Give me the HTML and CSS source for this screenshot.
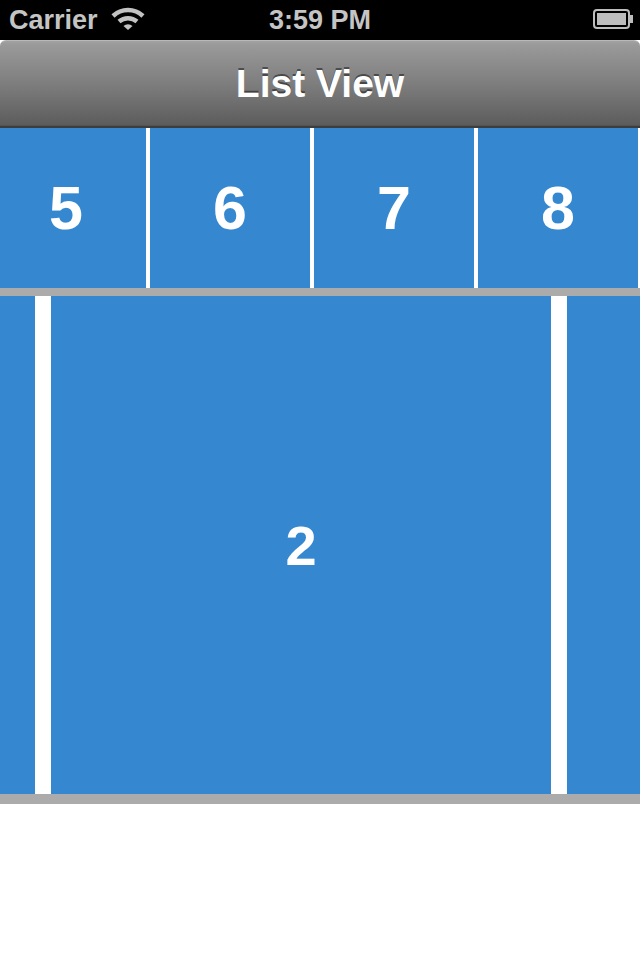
FILE: index.html
```html
<!DOCTYPE html>
<html lang="en">
<head>
    <meta charset="UTF-8">
    <meta name="viewport" content="width=device-width, initial-scale=1.0">
    <title>List View</title>
    <link rel="stylesheet" href="styles.css">
</head>
<body>
    <div class="statusbar">
        <div class="status-left">
            <span>Carrier</span>
            <svg class="wifi" width="34" height="24" viewBox="0 0 34 24">
                <path d="M2 9 A22 22 0 0 1 32 9" fill="none" stroke="#c2c2c2" stroke-width="4.5"/>
                <path d="M8 14.5 A14 14 0 0 1 26 14.5" fill="none" stroke="#c2c2c2" stroke-width="4.5"/>
                <path d="M12.5 19 L17 23 L21.5 19 A6.5 6.5 0 0 0 12.5 19 Z" fill="#c2c2c2"/>
            </svg>
        </div>
        <div class="status-time">3:59 PM</div>
        <div class="status-right">
            <svg width="42" height="20" viewBox="0 0 42 20">
                <rect x="1" y="1" width="35" height="18" rx="3" fill="none" stroke="#bdbdbd" stroke-width="2"/>
                <rect x="4" y="4" width="29" height="12" fill="#bdbdbd"/>
                <rect x="37" y="6" width="3" height="8" fill="#bdbdbd"/>
            </svg>
        </div>
    </div>

    <div class="navbar">
        <h1>List View</h1>
    </div>

    <!-- horizontal list, scrolled a bit -->
    <div class="strip">
        <div class="strip-track">
            <div class="tile">5</div>
            <div class="tile">6</div>
            <div class="tile">7</div>
            <div class="tile">8</div>
            <div class="tile"></div>
        </div>
    </div>

    <!-- paged list, neighbours peek in at the sides -->
    <div class="pager">
        <div class="pager-track">
            <div class="page"></div>
            <div class="page">2</div>
            <div class="page"></div>
        </div>
    </div>
</body>
</html>
```

FILE: styles.css
```css
* { box-sizing: border-box; }

body {
    margin: 0;
    width: 640px;
    height: 960px;
    overflow: hidden;
    background: #fff;
    font-family: "Liberation Sans", Arial, sans-serif;
}

.statusbar {
    height: 40px;
    background: #000;
    color: #c4c4c4;
    font-size: 27px;
    font-weight: bold;
    display: flex;
    align-items: center;
    justify-content: space-between;
    padding: 0 5px 0 9px;
    position: relative;
}

.status-left {
    display: flex;
    align-items: center;
    gap: 13px;
}

.wifi {
    margin-top: -3px;
}

.status-time {
    position: absolute;
    left: 0;
    right: 0;
    text-align: center;
    pointer-events: none;
}

.status-right {
    display: flex;
    align-items: center;
    margin-top: -2px;
}

.navbar {
    height: 88px;
    background: linear-gradient(to bottom, #a2a2a2 0%, #9a9a9a 4%, #7d7d7d 50%, #5c5c5c 97%, #3d3d3d 97.5%, #3d3d3d 100%);
    border-radius: 6px 6px 0 0;
    border-top: 1px solid #b8b8b8;
    display: flex;
    align-items: center;
    justify-content: center;
    padding-bottom: 2px;
}

.navbar h1 {
    margin: 0;
    color: #fff;
    font-size: 39px;
    font-weight: bold;
    text-shadow: 0 -2px 0 rgba(0,0,0,0.45);
}

.strip {
    height: 160px;
    background: #fff;
    overflow: hidden;
}

.strip-track {
    display: flex;
    gap: 4px;
    margin-left: -14px;
}

.tile,
.page {
    flex: none;
    background: #3588d0;
    color: #fff;
    font-weight: bold;
    display: flex;
    align-items: center;
    justify-content: center;
}

.tile {
    width: 160px;
    height: 160px;
    font-size: 61px;
}

.pager {
    background: #ababab;
    padding: 8px 0 10px;
    overflow: hidden;
}

.pager-track {
    display: flex;
    gap: 16px;
    margin-left: -465px;
    background: #fff;
    height: 498px;
}

.page {
    width: 500px;
    height: 498px;
    font-size: 56px;
}
```
